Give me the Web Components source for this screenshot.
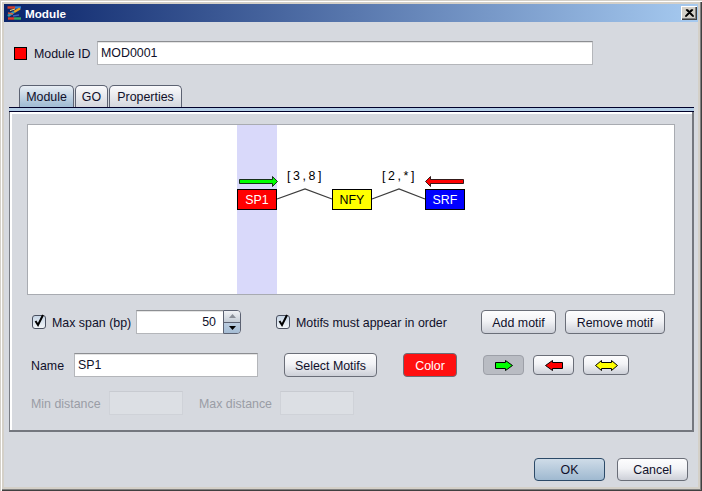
<!DOCTYPE html>
<html><head><meta charset="utf-8">
<style>
html,body{margin:0;padding:0;background:#d6d9df}
body{width:702px;height:491px;overflow:hidden;font:12.4px "Liberation Sans",Arial,sans-serif;color:#10102a}
</style></head><body>
<module-dialog title-text="Module">
  <id-row>
    <text-field style="--w:496px;margin-left:7px" value="MOD0001"></text-field>
  </id-row>
  <tab-panel>
    <motif-diagram></motif-diagram>
    <form-row style="margin-top:15px">
      <check-box style="margin-left:5px;--lw:84px" label="Max span (bp)"></check-box>
      <spin-box value="50"></spin-box>
      <check-box style="margin-left:35px;--lw:151px" label="Motifs must appear in order"></check-box>
      <ui-button style="--w:75px;margin-left:34px">Add motif</ui-button>
      <ui-button style="--w:100px;margin-left:9px">Remove motif</ui-button>
    </form-row>
    <form-row style="margin-top:19px">
      <form-label style="margin-left:4px;--lw:43px">Name</form-label>
      <text-field style="--w:184px" value="SP1"></text-field>
      <ui-button style="--w:93px;margin-left:26px">Select Motifs</ui-button>
      <ui-button variant="red" style="--w:54px;margin-left:26px">Color</ui-button>
      <arrow-button kind="right" pressed style="--w:41px;margin-left:26px"></arrow-button>
      <arrow-button kind="left" style="--w:41px;margin-left:9px"></arrow-button>
      <arrow-button kind="both" style="--w:46px;margin-left:9px"></arrow-button>
    </form-row>
    <form-row style="margin-top:14px;color:#9a9da6">
      <form-label style="margin-left:4px;--lw:78px">Min distance</form-label>
      <text-field disabled style="--w:74px"></text-field>
      <form-label style="margin-left:16px;--lw:81px">Max distance</form-label>
      <text-field disabled style="--w:74px"></text-field>
    </form-row>
  </tab-panel>
  <dialog-actions>
    <ui-button variant="primary" style="--w:71px;--h:23px">OK</ui-button>
    <ui-button style="--w:71px;--h:23px;margin-left:12px">Cancel</ui-button>
  </dialog-actions>
</module-dialog>
<script>
function def(name, html){
  customElements.define(name, class extends HTMLElement{
    connectedCallback(){
      if(this.shadowRoot) return;
      const r=this.attachShadow({mode:'open'});
      r.innerHTML=typeof html==='function'?html(this):html;
    }
  });
}
const esc=s=>String(s||'').replace(/&/g,'&amp;').replace(/"/g,'&quot;').replace(/</g,'&lt;');

def('module-dialog', el=>`<style>
:host{display:block;box-sizing:border-box;width:702px;height:491px;padding:4px;background:#d4d0c8;
 box-shadow:inset 1px 1px 0 #d4d0c8,inset 2px 2px 0 #fff,inset -1px -1px 0 #404040,inset -2px -2px 0 #808080}
.title{height:18px;display:flex;align-items:center;color:#fff;font-weight:bold;font-size:11.7px;
 background:linear-gradient(90deg,#0a246a,#a6caf0)}
.logo{margin:0 3px 0 2px;flex:none}
.close{margin-left:auto;margin-right:1px;box-sizing:border-box;width:16px;height:14px;background:#d4d0c8;
 box-shadow:inset 1px 1px 0 #fff,inset -1px -1px 0 #404040,inset -2px -2px 0 #808080;display:flex;align-items:center;justify-content:center}
.body{box-sizing:border-box;height:465px;background:#d6d9df;padding:19px 4px 0 5px}
</style>
<div class="title">
<svg class="logo" width="16" height="16" viewBox="0 0 16 16" fill="none">
 <path d="M1.500 2.500H9" stroke="#d8402a" stroke-width="2.400"/><path d="M9 2.500H15" stroke="#3080d0" stroke-width="2.400"/>
 <path d="M14 3.500L8 7" stroke="#e8a020" stroke-width="2.400"/><path d="M8 7L2 11" stroke="#30a0b0" stroke-width="2.600"/>
 <path d="M2 8L7 9" stroke="#d86040" stroke-width="1.600"/>
 <path d="M2 13.500H8" stroke="#e03828" stroke-width="2.400"/><path d="M8 13.500H15" stroke="#38a860" stroke-width="2.400"/>
 <path d="M4 5.500L9 4" stroke="#f0e070" stroke-width="1"/><path d="M7 11L13 10" stroke="#4060c0" stroke-width="1.400"/>
</svg>
<span>${esc(el.getAttribute('title-text'))}</span>
<div class="close"><svg width="9" height="8" viewBox="0 0 9 8"><path d="M1 0.500L8 7.500M2.300 0.500L9 7.500M8 0.500L1 7.500M6.700 0.500L0 7.500" stroke="#000" stroke-width="1.100" fill="none"/></svg></div>
</div>
<div class="body"><slot></slot></div>`);

def('id-row', `<style>
:host{display:flex;align-items:center;height:24px;padding-left:5px}
.sw{box-sizing:border-box;width:13px;height:13px;background:#f00;border:1px solid #000;margin-right:7px;flex:none}
span{width:56px;flex:none;padding-top:1px;white-space:nowrap}
</style><div class="sw"></div><span>Module ID</span><slot></slot>`);

def('form-label', `<style>:host{display:block;flex:none;width:var(--lw);padding-top:1px}</style><slot></slot>`);

def('text-field', el=>{
  const dis=el.hasAttribute('disabled');
  return `<style>
:host{display:block;flex:none;width:var(--w,100px);height:24px}
div{box-sizing:border-box;height:100%;padding:1px 3px 0;line-height:21px;white-space:nowrap;
 background:${dis?'#dcdfe4':'#fff'};
 border:1px solid ${dis?'#cfd2d8':'#b4b6ba'};border-top-color:${dis?'#c8cbd1':'#8c8e92'};
 box-shadow:${dis?'none':'inset 0 1px 0 #e4e4e4'};color:#10102a}
</style><div>${esc(el.getAttribute('value'))}</div>`});

def('tab-panel', `<style>
:host{display:block;margin-top:20px}
.tabs{display:flex;height:22px;padding-left:10px;box-sizing:border-box;align-items:flex-end}
.tab{box-sizing:border-box;height:22px;border:1px solid #5c6272;border-bottom:0;border-radius:5px 5px 0 0;
 display:flex;align-items:center;justify-content:center;margin-right:1px;
 background:linear-gradient(#fafafc,#d4d7de);color:#10102a;padding-top:1px}
.tab.on{background:linear-gradient(#e8eef4,#a5bfd6 90%)}
.strip{box-sizing:border-box;height:5px;background:#b3cde6;border-top:1px solid #00002a;border-bottom:1px solid #00002a}
.content{box-sizing:border-box;height:320px;padding:12px 17px 0 17px;
 border-left:1px solid #7a7d84;border-right:2px solid #74777e;border-bottom:2px solid #74777e;
 box-shadow:inset 2px 2px 0 #fff}
</style>
<div class="tabs">
 <div class="tab on" style="width:55px">Module</div>
 <div class="tab" style="width:33px">GO</div>
 <div class="tab" style="width:73px">Properties</div>
</div>
<div class="strip"></div>
<div class="content"><slot></slot></div>`);

def('motif-diagram', `<style>
:host{display:block;box-sizing:border-box;width:648px;height:171px;background:#fff;border:1px solid #a8abb1}
svg{display:block}
text{font:12.4px "Liberation Sans",Arial,sans-serif}
</style>
<svg width="646" height="169" viewBox="28 125 646 169">
 <rect x="237" y="125" width="40" height="169" fill="#d9d9fa"/>
 <polyline points="277,199 305,189 332,199" fill="none" stroke="#3c3c3c" stroke-width="1.300"/>
 <polyline points="372,199 399,189 425,199" fill="none" stroke="#3c3c3c" stroke-width="1.300"/>
 <rect x="237.500" y="189.500" width="39" height="20" fill="#f00" stroke="#000"/>
 <rect x="332.500" y="189.500" width="39" height="20" fill="#ff0" stroke="#000"/>
 <rect x="425.500" y="189.500" width="39" height="20" fill="#00f" stroke="#000"/>
 <text x="257" y="204" text-anchor="middle" fill="#fff">SP1</text>
 <text x="352" y="204" text-anchor="middle" fill="#000">NFY</text>
 <text x="445" y="204" text-anchor="middle" fill="#fff">SRF</text>
 <text x="287" y="180" fill="#000" letter-spacing="2.600">[3,8]</text>
 <text x="382" y="180" fill="#000" letter-spacing="2.600">[2,*]</text>
 <polygon points="239.500,179.500 272.500,179.500 272.500,176.500 277.500,181.500 272.500,186.500 272.500,183.500 239.500,183.500" fill="#0f0" stroke="#000" stroke-width="0.800"/>
 <polygon points="463.500,179.500 430.500,179.500 430.500,176.500 425.500,181.500 430.500,186.500 430.500,183.500 463.500,183.500" fill="#f00" stroke="#000" stroke-width="0.800"/>
</svg>`);

def('form-row', `<style>:host{display:flex;align-items:center;height:24px;white-space:nowrap}</style><slot></slot>`);

def('dialog-actions', `<style>:host{display:flex;justify-content:flex-end;margin-top:26px;padding-right:6px}</style><slot></slot>`);

def('check-box', el=>`<style>
:host{display:inline-flex;align-items:center;flex:none}
.b{box-sizing:border-box;width:14px;height:14px;border:1px solid #4a5060;border-radius:3px;margin-right:6px;
 background:linear-gradient(#c8d6e6,#f2f5f8);flex:none}
svg{display:block;margin:-3px 0 0 0}
span{display:block;width:var(--lw);padding-top:1px}
</style><div class="b"><svg width="13" height="14" viewBox="0 0 13 14"><path d="M2.500 8L5 12L10 2" fill="none" stroke="#000" stroke-width="2"/></svg></div><span>${esc(el.getAttribute('label'))}</span>`);

def('spin-box', el=>`<style>
:host{display:flex;flex:none;width:105px;height:24px}
.f{box-sizing:border-box;width:87px;height:24px;background:#fff;border:1px solid #b4b6ba;border-top-color:#8c8e92;
 text-align:right;padding:1px 7px 0 0;line-height:21px;border-right:0;box-shadow:inset 0 1px 0 #e4e4e4}
.s{box-sizing:border-box;width:18px;height:24px;border:1px solid #5c6272;border-radius:0 4px 4px 0;display:flex;flex-direction:column;overflow:hidden}
.s div{flex:1;display:flex;align-items:center;justify-content:center}
.s .u{background:linear-gradient(#f0f2f5,#c4ccd6)}
.s .d{background:linear-gradient(#bccde0,#a4bcd4);border-top:1px solid #5c6272}
</style><div class="f">${esc(el.getAttribute('value'))}</div>
<div class="s"><div class="u"><svg width="7" height="4" viewBox="0 0 7 4"><path d="M3.500 0L7 4H0z" fill="#8a8f98"/></svg></div><div class="d"><svg width="7" height="4" viewBox="0 0 7 4"><path d="M0 0H7L3.500 4z" fill="#000"/></svg></div></div>`);

def('ui-button', el=>{
  const v=el.getAttribute('variant');
  const bg=v==='primary'?'linear-gradient(#cfdce8,#9fb9d0)':v==='red'?'#ff1010':'linear-gradient(#fdfdfe,#f2f3f6 45%,#cdd0d8)';
  const bd=v==='primary'?'#2c4a68':'#6a6e78';
  return `<style>
:host{display:block;flex:none;width:var(--w,80px);height:var(--h,24px)}
button{all:unset;box-sizing:border-box;display:flex;align-items:center;justify-content:center;width:100%;height:100%;padding-top:1px;
 border:1px solid ${bd};border-radius:4px;background:${bg};color:${v==='red'?'#fff':'#10102a'};font:12.4px "Liberation Sans",Arial,sans-serif}
</style><button><slot></slot></button>`});

def('arrow-button', el=>{
  const k=el.getAttribute('kind'), p=el.hasAttribute('pressed');
  const icons={
   right:'<svg width="18" height="11" viewBox="0 0 18 11"><path d="M0.500 2.500H10.500V0.500L17.500 5.500L10.500 10.500V8.500H0.500Z" fill="#0f0" stroke="#000"/></svg>',
   left:'<svg width="18" height="11" viewBox="0 0 18 11"><path d="M17.500 2.500H7.500V0.500L0.500 5.500L7.500 10.500V8.500H17.500Z" fill="#f00" stroke="#000"/></svg>',
   both:'<svg width="23" height="11" viewBox="0 0 23 11"><path d="M6.500 2.500H16.500V0.500L22.500 5.500L16.500 10.500V8.500H6.500V10.500L0.500 5.500L6.500 0.500Z" fill="#ff0" stroke="#000"/></svg>'};
  return `<style>
:host{display:block;flex:none;width:var(--w,40px);height:20px}
div{box-sizing:border-box;width:100%;height:100%;display:flex;align-items:center;justify-content:center;border-radius:4px;
 border:1px solid ${p?'#9da0a8':'#6a6e78'};background:${p?'#b9bcc3':'linear-gradient(#fdfdfe,#f2f3f6 45%,#cdd0d8)'}}
svg{display:block}
</style><div>${icons[k]}</div>`});
</script>
</body></html>
